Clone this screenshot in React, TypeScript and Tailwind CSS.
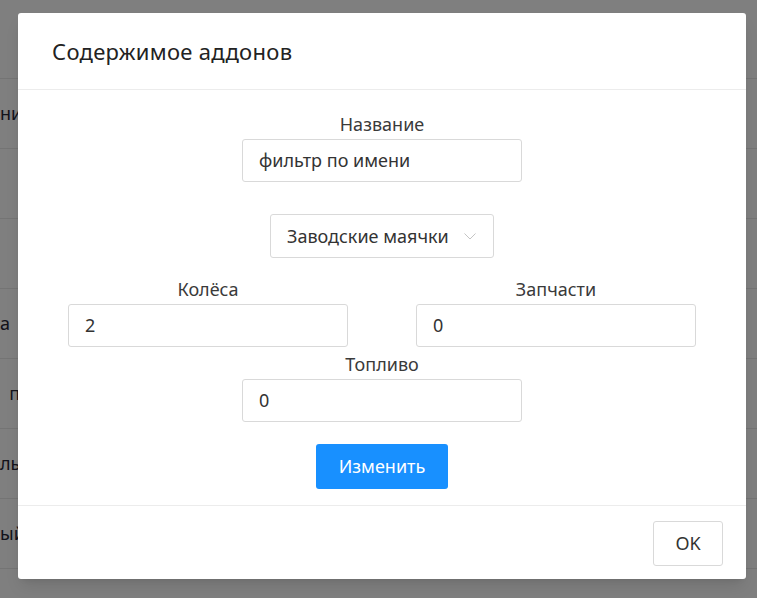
const rows = [
  { text: "", h: "h-[79px]" },
  { text: "ние", h: "h-[70px]" },
  { text: "", h: "h-[70px]" },
  { text: "", h: "h-[70px]" },
  { text: "а", h: "h-[70px]" },
  { text: "\u00a0\u00a0по", h: "h-[70px]" },
  { text: "ль", h: "h-[70px]" },
  { text: "ый", h: "h-[70px]" },
  { text: "", h: "h-[70px]" },
];

function Field({ label, value, className = "" }: { label: string; value: string; className?: string }) {
  return (
    <div className={"flex flex-col items-center " + className}>
      <div className="h-6 leading-6 text-[18px] text-[#3a3a3a]">{label}</div>
      <div className="mt-[3px] w-[280px] h-[43px] border border-[#d9d9d9] rounded-[3px] bg-white flex items-center px-4 text-[18px] text-[#333]">
        {value}
      </div>
    </div>
  );
}

export default function App() {
  return (
    <div className="relative w-[757px] h-[598px] overflow-hidden bg-white font-['Noto_Sans',sans-serif]">
      {/* page behind the modal */}
      <div className="flex flex-col">
        {rows.map((r, i) => (
          <div key={i} className={"flex items-center border-b border-[#e8e8e8] whitespace-nowrap text-[18px] text-[#262636] " + r.h}>
            {r.text}
          </div>
        ))}
      </div>
      <div className="absolute inset-0 bg-black/50" />

      {/* modal */}
      <div className="absolute left-[18px] top-[13px] w-[728px] h-[566px] bg-white rounded-[3px] flex flex-col shadow-lg">
        <div className="h-[77px] border-b border-[#ececec] flex items-center px-[34px]">
          <h2 className="text-[22px] font-normal text-[#222] tracking-[0.3px]">Содержимое аддонов</h2>
        </div>

        <div className="flex-1 flex flex-col items-center pt-[22px]">
          <Field label="Название" value="фильтр по имени" />

          <div className="mt-[32px] w-[224px] h-[44px] border border-[#d9d9d9] rounded-[3px] flex items-center justify-between pl-4 pr-[16px] text-[18px] text-[#333]">
            <span>Заводские маячки</span>
            <svg width="14" height="14" viewBox="0 0 14 14" fill="none" stroke="#c4c4c4" strokeWidth="1">
              <path d="M1.5 4.5 L7 10 L12.5 4.5" />
            </svg>
          </div>

          <div className="mt-[19px] w-full flex justify-between px-[50px]">
            <Field label="Колёса" value="2" />
            <Field label="Запчасти" value="0" />
          </div>

          <Field label="Топливо" value="0" className="mt-[5px]" />

          <button className="mt-[22px] w-[132px] h-[45px] rounded-[3px] bg-[#1890ff] text-white text-[18px] font-normal">
            Изменить
          </button>
        </div>

        <div className="h-[74px] border-t border-[#ececec] flex items-center justify-end pr-[23px] pt-[1px]">
          <button className="w-[70px] h-[45px] border border-[#d9d9d9] rounded-[3px] bg-white text-[18px] text-[#333]">
            OK
          </button>
        </div>
      </div>
    </div>
  );
}
